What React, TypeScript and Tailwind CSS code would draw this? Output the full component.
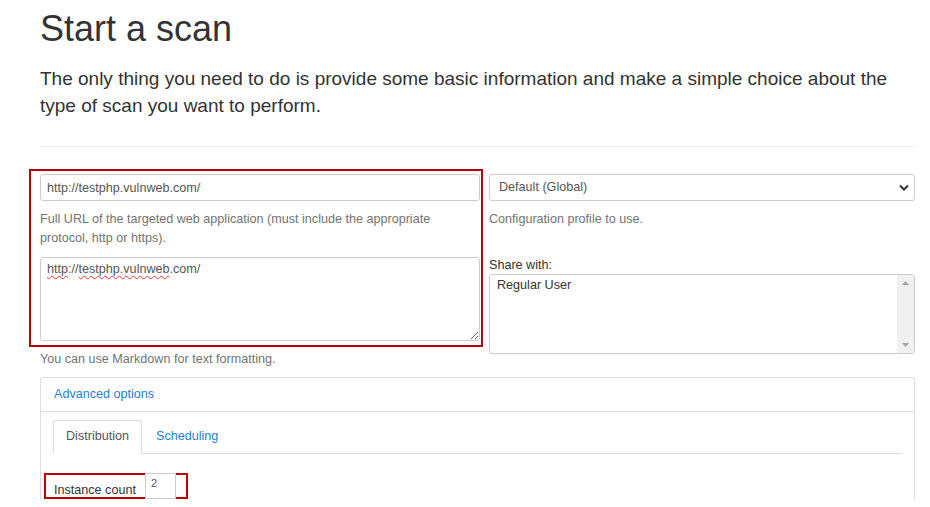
import { FC } from "react";

const font = { fontFamily: '"Liberation Sans", Arial, sans-serif' };

const ScanForm: FC = () => {
  return (
    <div className="flex gap-[9px]">
      {/* left column, framed in red as in the screenshot */}
      <div className="w-[440px]">
        <div className="-mt-[5px] -mr-[3px] -ml-[11px] border-2 border-[#c00000] pt-[3px] pr-[1px] pb-[4px] pl-[9px]">
          <input
            className="block h-[27px] w-full rounded-[3px] border border-[#ccc] px-[6px] text-[12.6px] text-[#555] outline-none"
            defaultValue="http://testphp.vulnweb.com/"
          />
          <p className="mt-[9px] text-[12.6px] leading-[18.6px] text-[#737373]">
            Full URL of the targeted web application (must include the
            appropriate protocol, http or https).
          </p>
          <div className="mt-[10px] h-[84px] resize-y overflow-auto rounded-[3px] border border-[#ccc] px-[6px] pt-[2px] text-[12.6px] leading-[18px] text-[#555]">
            <span className="underline decoration-[#e33] decoration-wavy decoration-1 underline-offset-2">
              http
            </span>
            ://
            <span className="underline decoration-[#e33] decoration-wavy decoration-1 underline-offset-2">
              testphp.vulnweb
            </span>
            .com/
          </div>
        </div>
        <p className="mt-[3px] text-[12.6px] leading-[18.6px] text-[#737373]">
          You can use Markdown for text formatting.
        </p>
      </div>

      {/* right column */}
      <div className="w-[426px]">
        <div className="relative">
          <select className="block h-[27px] w-full appearance-none rounded-[3px] border border-[#ccc] bg-white pl-[9px] text-[12.6px] text-[#555] outline-none">
            <option>Default (Global)</option>
          </select>
          <svg
            className="pointer-events-none absolute top-[10px] right-[6px]"
            width="10"
            height="7"
            viewBox="0 0 10 7"
          >
            <path d="M1 1.5l4 4 4-4" fill="none" stroke="#333" strokeWidth="2" />
          </svg>
        </div>
        <p className="mt-[9px] text-[12.6px] leading-[18.6px] text-[#737373]">
          Configuration profile to use.
        </p>
        <label className="mt-[27px] block text-[12.6px] leading-[18.6px] text-[#333]">
          Share with:
        </label>
        <div className="flex h-[80px] overflow-hidden rounded-[3px] border border-[#ccc]">
          <div className="flex-1 px-[7px] pt-[1px] text-[12.6px] leading-[18px] text-[#333]">
            Regular User
          </div>
          <div className="flex w-[17px] flex-col items-center justify-between bg-[#f0f0f0] py-[6px]">
            <svg width="7" height="4" viewBox="0 0 7 4">
              <path d="M0 4L3.5 0L7 4z" fill="#a3a3a3" />
            </svg>
            <svg width="7" height="4" viewBox="0 0 7 4">
              <path d="M0 0L3.5 4L7 0z" fill="#a3a3a3" />
            </svg>
          </div>
        </div>
      </div>
    </div>
  );
};

const Advanced: FC = () => {
  return (
    <div className="mt-[8px] rounded-t-[3px] border border-b-0 border-[#ddd] bg-white">
      <div className="flex h-[34px] items-center border-b border-[#ddd] px-[13px] text-[12.6px] text-[#1f80d2]">
        Advanced options
      </div>
      <div className="pt-[8px] pr-[12px] pl-[12px]">
        <div className="flex border-b border-[#ddd]">
          <div className="-mb-px flex h-[34px] items-center rounded-t-[3px] border border-[#ddd] border-b-white bg-white px-[12px] text-[12.6px] text-[#555]">
            Distribution
          </div>
          <div className="flex h-[33px] items-center px-[14px] text-[12.6px] text-[#1f80d2]">
            Scheduling
          </div>
        </div>
        <div className="mt-[19px] -ml-[9px] flex h-[26px] w-[144px] items-end border-2 border-[#c00000] pl-[8px]">
          <span className="text-[12.6px] leading-[14px] text-[#333]">
            Instance count
          </span>
          <div className="-mt-[2px] ml-[9px] h-[26px] w-[31px] self-start border border-[#ccc] bg-white pt-[2px] pl-[5px] text-[11px] leading-[14px] text-[#555]">
            2
          </div>
        </div>
      </div>
    </div>
  );
};

const App: FC = () => {
  return (
    <div className="min-h-[507px] bg-white pr-[15px] pl-[40px]" style={font}>
      <h1 className="pt-[9px] text-[36px] leading-[40px] font-normal text-[#333]">
        Start a scan
      </h1>
      <p className="mt-[16px] text-[19px] leading-[27px] text-[#333]">
        The only thing you need to do is provide some basic information and
        make a simple choice about the type of scan you want to perform.
      </p>
      <hr className="mt-[27px] mb-[27px] border-t border-[#eee]" />
      <ScanForm />
      <Advanced />
    </div>
  );
};

export default App;
